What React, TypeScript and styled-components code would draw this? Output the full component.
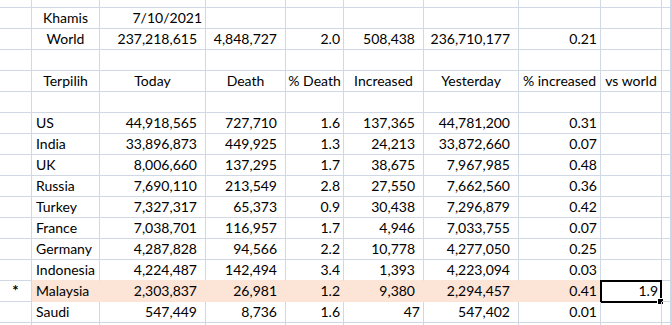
import React from 'react'
import styled, { createGlobalStyle } from 'styled-components'

const GlobalStyle = createGlobalStyle`
  html, body {
    margin: 0;
    padding: 0;
    background: #ffffff;
  }
  body {
    font-family: Lato, "Open Sans", sans-serif;
    color: #000000;
  }
`

const GRID = '#D0D7E5'
const PEACH = '#FCE4D6'

const Sheet = styled.div`
  display: grid;
  grid-template-columns: 32px 68px 106px 80px 58px 80px 95px 82px 61px 1fr;
  grid-template-rows: 8px;
  grid-auto-rows: 21px;
  width: 671px;
  height: 325px;
  overflow: hidden;
`

type Align = 'left' | 'center' | 'right'

const Cell = styled.div<{ $align?: Align; $pad?: number; $fill?: boolean; $fillBelow?: boolean }>`
  position: relative;
  box-sizing: border-box;
  display: flex;
  align-items: flex-end;
  justify-content: ${(p) => (p.$align === 'right' ? 'flex-end' : p.$align === 'center' ? 'center' : 'flex-start')};
  padding: 0 ${(p) => (p.$align === 'right' ? p.$pad ?? 3 : 3)}px 2px ${(p) => (p.$align === 'left' ? 4 : 3)}px;
  border-right: 1px solid ${(p) => (p.$fill ? PEACH : GRID)};
  border-bottom: 1px solid ${(p) => (p.$fill || p.$fillBelow ? PEACH : GRID)};
  background: ${(p) => (p.$fill ? PEACH : 'transparent')};
  font-size: 14px;
  line-height: 17px;
  white-space: nowrap;
`

const Marker = styled(Cell)`
  border-right-color: ${GRID};
  font-size: 15px;
  font-weight: 700;
`

const Selected = styled.div`
  position: absolute;
  left: -1px;
  top: -1px;
  right: -1px;
  bottom: -2px;
  border: 2px solid #000000;
  pointer-events: none;
`

const FillHandle = styled.span`
  position: absolute;
  right: -4px;
  bottom: -4px;
  width: 5px;
  height: 5px;
  background: #000000;
  border: 1px solid #ffffff;
`

type Row = { label: string; values: string[]; extra?: string; mark?: boolean }

const countries: Row[] = [
  { label: 'US', values: ['44,918,565', '727,710', '1.6', '137,365', '44,781,200', '0.31'] },
  { label: 'India', values: ['33,896,873', '449,925', '1.3', '24,213', '33,872,660', '0.07'] },
  { label: 'UK', values: ['8,006,660', '137,295', '1.7', '38,675', '7,967,985', '0.48'] },
  { label: 'Russia', values: ['7,690,110', '213,549', '2.8', '27,550', '7,662,560', '0.36'] },
  { label: 'Turkey', values: ['7,327,317', '65,373', '0.9', '30,438', '7,296,879', '0.42'] },
  { label: 'France', values: ['7,038,701', '116,957', '1.7', '4,946', '7,033,755', '0.07'] },
  { label: 'Germany', values: ['4,287,828', '94,566', '2.2', '10,778', '4,277,050', '0.25'] },
  { label: 'Indonesia', values: ['4,224,487', '142,494', '3.4', '1,393', '4,223,094', '0.03'] },
  { label: 'Malaysia', values: ['2,303,837', '26,981', '1.2', '9,380', '2,294,457', '0.41'], extra: '1.9', mark: true },
  { label: 'Saudi', values: ['547,449', '8,736', '1.6', '47', '547,402', '0.01'] },
]

const headers = ['Terpilih', 'Today', 'Death', '% Death', 'Increased', 'Yesterday', '% increased', 'vs world']

// numbers with thousand separators carry the wider right padding
const padFor = (v: string) => (v.includes(',') ? 8 : 3)

const BlankRow = ({ n = 10 }: { n?: number }) => (
  <>
    {Array.from({ length: n }).map((_, i) => (
      <Cell key={i} />
    ))}
  </>
)

export default function App() {
  return (
    <>
      <GlobalStyle />
      <Sheet>
        <BlankRow />

        <Cell />
        <Cell $align="center">Khamis</Cell>
        <Cell $align="right" $pad={3}>7/10/2021</Cell>
        {Array.from({ length: 7 }).map((_, i) => (
          <Cell key={i} />
        ))}

        <Cell />
        <Cell $align="center">World</Cell>
        {['237,218,615', '4,848,727', '2.0', '508,438', '236,710,177', '0.21'].map((v) => (
          <Cell key={v} $align="right" $pad={padFor(v)}>{v}</Cell>
        ))}
        <Cell />
        <Cell />

        <BlankRow />

        <Cell />
        {headers.map((h) => (
          <Cell key={h} $align="center">{h}</Cell>
        ))}
        <Cell />

        <BlankRow />

        {countries.map((r, idx) => {
          const nextMarked = countries[idx + 1]?.mark
          return (
            <React.Fragment key={r.label}>
              <Marker $align="center">{r.mark ? '*' : ''}</Marker>
              <Cell $align="left" $fill={r.mark} $fillBelow={nextMarked}>{r.label}</Cell>
              {r.values.map((v, i) => (
                <Cell key={i} $align="right" $pad={padFor(v)} $fill={r.mark} $fillBelow={nextMarked}>{v}</Cell>
              ))}
              <Cell $align="right" $pad={3}>
                {r.extra}
                {r.extra && (
                  <Selected>
                    <FillHandle />
                  </Selected>
                )}
              </Cell>
              <Cell />
            </React.Fragment>
          )
        })}

        <BlankRow />
      </Sheet>
    </>
  )
}
